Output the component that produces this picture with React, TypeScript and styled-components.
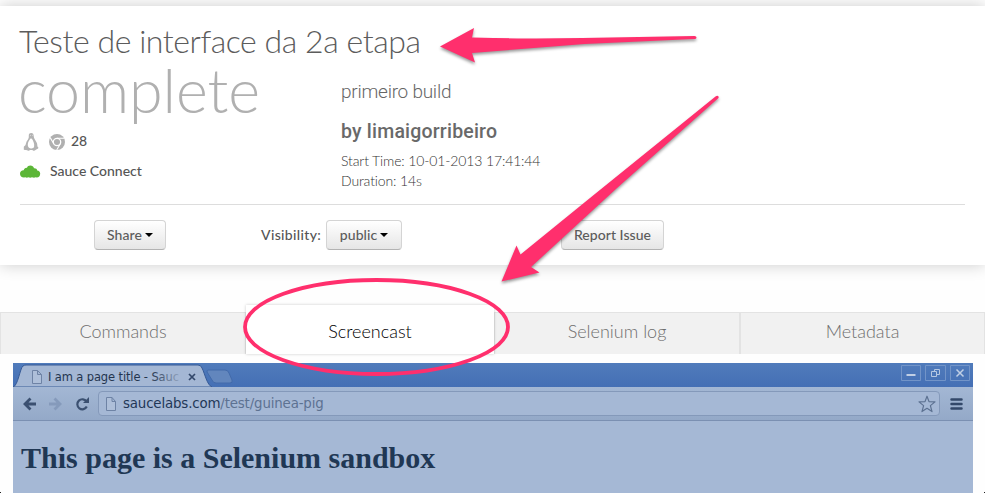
import React from 'react';
import styled, { createGlobalStyle } from 'styled-components';

const Global = createGlobalStyle`
  * { box-sizing: border-box; }
  html, body { margin: 0; padding: 0; overflow: hidden; background: #fff; }
  body { font-family: Lato, sans-serif; color: #555; }
`;

const Page = styled.div`
  position: relative;
  width: 985px;
  height: 493px;
  overflow: hidden;
  background: #fefefe;
  padding-top: 6px;
`;

const Card = styled.section`
  height: 259px;
  background: #fff;
  box-shadow: 0 0 15px rgba(0, 0, 0, 0.2);
  padding: 0 20px;
  display: flex;
  flex-direction: column;
`;

const Summary = styled.div`
  height: 199px;
  border-bottom: 1px solid #ddd;
  display: grid;
  grid-template-columns: 321px 1fr;
  grid-template-rows: 59px 1fr;
`;

const Title = styled.h1`
  grid-column: 1 / -1;
  margin: 0 0 0 -1px;
  padding-top: 15px;
  font-size: 32px;
  line-height: 40px;
  font-weight: 300;
  letter-spacing: -0.44px;
  color: #5c5c5c;
  white-space: nowrap;
`;

const StatusColumn = styled.div`
  display: flex;
  flex-direction: column;
`;

const Status = styled.div`
  height: 66px;
  margin-left: -2px;
  line-height: 50px;
  font-size: 61px;
  font-weight: 300;
  letter-spacing: -0.1px;
  color: #b0b0b0;
`;

const Platform = styled.div`
  display: flex;
  align-items: center;
  height: 22px;
  gap: 9px;
  font-size: 14px;
  font-weight: 500;
`;

const Version = styled.span`
  margin-left: -3px;
  padding-bottom: 3px;
`;

const Connect = styled.div`
  display: flex;
  align-items: center;
  height: 36px;
  gap: 9px;
  font-size: 14px;
  font-weight: 500;
  padding-bottom: 1px;
`;

const Details = styled.div`
  display: flex;
  flex-direction: column;
  padding-top: 14px;
`;

const Build = styled.div`
  font: 300 19px/26px Roboto, sans-serif;
  letter-spacing: -0.25px;
  color: #666;
`;

const Author = styled.div`
  margin-top: 14px;
  font: 500 19.5px/26px Roboto, sans-serif;
  letter-spacing: 0.2px;
  color: #696969;
`;

const Meta = styled.div`
  margin-top: 6px;
  font-size: 14px;
  line-height: 20px;
  font-weight: 300;
  letter-spacing: -0.13px;
  color: #333;
  white-space: pre-line;
`;

const Actions = styled.div`
  display: flex;
  align-items: flex-start;
  padding: 15px 0 0 74px;
`;

const Button = styled.button<{ $width: number }>`
  width: ${p => p.$width}px;
  height: 30px;
  padding: 0;
  display: flex;
  align-items: center;
  justify-content: center;
  gap: 3px;
  border: 1px solid #d4d4d4;
  border-bottom-color: #b3b3b3;
  border-radius: 4px;
  background: linear-gradient(#fff, #e6e6e6);
  color: #5c5c5c;
  font: 500 14px/20px Lato, sans-serif;
  letter-spacing: 0.05px;
  white-space: nowrap;
`;

const Caret = styled.i`
  border: 4px solid transparent;
  border-top-color: #000;
  border-bottom: 0;
`;

const Visibility = styled.label`
  width: 65px;
  margin-left: 95px;
  font-size: 14px;
  line-height: 30px;
  font-weight: 500;
  letter-spacing: 0.35px;
  white-space: nowrap;
`;

const ReportSlot = styled.div`
  margin-left: 159px;
`;

const Tabs = styled.nav`
  display: flex;
  align-items: flex-end;
  height: 50px;
  margin-top: 39px;
`;

const Tab = styled.div<{ $width: number; $active?: boolean }>`
  width: ${p => p.$width}px;
  height: ${p => (p.$active ? 49 : 42)}px;
  padding-top: ${p => (p.$active ? 8 : 0)}px;
  line-height: 37px;
  text-align: center;
  font-size: 18px;
  font-weight: 300;
  color: ${p => (p.$active ? '#000' : '#6e6e6e')};
  background: ${p => (p.$active ? '#fff' : '#f1f1f1')};
  border: ${p => (p.$active ? '0' : '1px solid #e3e3e3')};
  border-bottom: 0;
  box-shadow: ${p => (p.$active ? '0 0 3px rgba(0, 0, 0, 0.2)' : 'none')};
  position: relative;
  z-index: ${p => (p.$active ? 1 : 0)};
`;

const Browser = styled.section`
  margin: 9px 12px 0 13px;
  height: 130px;
  background: #a5b8d5;
`;

const TitleBar = styled.div`
  height: 24px;
  display: flex;
  background: linear-gradient(#507bbb, #446fb5);
  justify-content: space-between;
`;

const TabStrip = styled.svg`
  display: block;
  width: 230px;
  height: 24px;
`;

const WindowButtons = styled.svg`
  display: block;
  width: 74px;
  height: 24px;
`;

const Toolbar = styled.div`
  height: 34px;
  display: flex;
  align-items: center;
  padding-left: 8px;
  background: linear-gradient(#a3b7d4, #94a9c8);
  border-bottom: 1px solid #7b90b2;
`;

const Address = styled.div`
  width: 842px;
  height: 25px;
  margin: 0 9px 0 9px;
  padding: 0 3px 0 6px;
  display: flex;
  align-items: center;
  border: 1px solid #8499ba;
  border-radius: 4px;
  background: #a5b8d5;
  font: 13.4px/22px "DejaVu Sans", sans-serif;
  letter-spacing: -0.17px;
  color: #5d7292;
`;

const Url = styled.span`
  flex: 1;
  padding-left: 6px;
  white-space: nowrap;
  b { font-weight: 400; color: #223757; }
`;

const Heading = styled.h2`
  margin: 0;
  padding: 19px 0 0 8px;
  font: bold 30px/36px "Liberation Serif", serif;
  color: #203754;
`;

const Annotation = styled.svg`
  position: absolute;
  inset: 0;
  z-index: 2;
  pointer-events: none;
  filter: drop-shadow(0 2px 1.5px rgba(0, 0, 0, 0.4));
`;

const Highlight = styled.svg`
  position: absolute;
  inset: 0;
  z-index: 2;
  pointer-events: none;
`;

const CornerMark = styled.i<{ $right?: boolean }>`
  position: absolute;
  bottom: 0;
  ${p => (p.$right ? 'right: 0;' : 'left: 0;')}
  width: 1px;
  height: 1px;
  background: #222;
`;

const Penguin = () => (
  <svg width="20" height="20" viewBox="0 0 20 20">
    <path d="M11.2 1C9.4 1 8.6 2.3 8.8 4c.2 2.2-.8 3.4-1.9 5.1-.8 1.4-.9 3.2-1.5 4.2-.7 1-1.8 1-1.6 2.1.3.8-.4 1.7.2 2.3 1 .5 3 .3 4.1 1 .9.3 1.4-.1 1.9-.6h2.4c.5.8 1.4 1 2.3.3.9-.8 3.3-1.6 3.7-2.5.2-.6-.8-.8-1-1.7-.1-1.1-.1-2.6-.9-4-1-2-2.800-3.800-2.800-6.100C13.700 2 12.900 1 11.200 1z" fill="#b3b3b3" />
    <path d="M10.300 6.400c-1 2-2.500 3.600-2.500 5.800-.2 1.600.6 3.500 2.300 4 1.500.5 3.700.1 4-1.500.6-2.900-.8-6.100-2.400-8.300l-.7.400z" fill="#fff" />
    <path d="M10.300 3.400h.6M12 3.400h.5" stroke="#fff" strokeWidth=".8" />
  </svg>
);

const Chrome = () => (
  <svg width="16" height="16" viewBox="0 0 16 16">
    <circle cx="8" cy="8" r="8" fill="#b0b0b0" />
    <circle cx="8" cy="8" r="3.700" fill="#b0b0b0" stroke="#fff" strokeWidth="1.300" />
    <path d="M8 4.300h7.300M4.800 9.800 1.200 3.600M11.200 9.900 7.700 16" stroke="#fff" strokeWidth="1.100" fill="none" />
  </svg>
);

const Cloud = () => (
  <svg width="21" height="14" viewBox="0 0 21 14">
    <path d="M4 13.500C1.500 13.500 0 12 0 9.800 0 7.600 1.600 6.200 3.700 6.300 4.100 4.500 5.500 3.600 6.900 3.900 7.500 2.200 8.800 1.500 10.300 1.500c1.900 0 3.200 1 3.700 2.700 1.700-.2 3 .7 3.200 2.200 1.800 0 3 1.400 3 3.400 0 2.200-1.400 3.700-3.400 3.700l-1.300-.3-1.500.5-2-.4-1.700.4-2-.4-1.500.4-1.500-.4z" fill="#5cb637" />
  </svg>
);

const PageIcon = () => (
  <svg width="12" height="16" viewBox="0 0 12 16">
    <path d="M1.500 1.500h5.500l3.500 4v9h-9zM7 1.500v4h3.500" fill="#aebfd9" stroke="#6e83a5" />
  </svg>
);

const tabs = [
  { label: 'Commands', width: 246 },
  { label: 'Screencast', width: 248, active: true },
  { label: 'Selenium log', width: 246 },
  { label: 'Metadata', width: 245 },
];

export default function App() {
  return (
    <Page>
      <Global />
      <Card>
        <Summary>
          <Title>Teste de interface da 2a etapa</Title>
          <StatusColumn>
            <Status>complete</Status>
            <Platform><Penguin /><Chrome /><Version>28</Version></Platform>
            <Connect><Cloud />Sauce Connect</Connect>
          </StatusColumn>
          <Details>
            <Build>primeiro build</Build>
            <Author>by limaigorribeiro</Author>
            <Meta>{'Start Time: 10-01-2013 17:41:44\nDuration: 14s'}</Meta>
          </Details>
        </Summary>
        <Actions>
          <Button $width={72}>Share<Caret /></Button>
          <Visibility>Visibility:</Visibility>
          <Button $width={76}>public<Caret /></Button>
          <ReportSlot><Button $width={103}>Report Issue</Button></ReportSlot>
        </Actions>
      </Card>
      <Tabs>
        {tabs.map(t => <Tab key={t.label} $width={t.width} $active={t.active}>{t.label}</Tab>)}
      </Tabs>
      <Browser>
        <TitleBar>
          <TabStrip viewBox="0 0 230 24">
            <defs>
              <linearGradient id="fade" gradientUnits="userSpaceOnUse" x1="138" x2="168" y1="0" y2="0">
                <stop stopColor="#23344e" />
                <stop offset="1" stopColor="#23344e" stopOpacity=".1" />
              </linearGradient>
            </defs>
            <path d="M0 24C5 23 7 5 10 3q1-1 3-1h172q3 0 4 3c3 6 5 17 10 19z" fill="#a4b7d4" stroke="#365a96" />
            <path d="M195 7h17q3 0 4 3l3 7q1 3-2 3h-14q-3 0-4-3l-5-8q0-2 1-2z" fill="#6286bd" stroke="#426aaa" />
            <path d="M19.500 7.500h5l4 4v9h-9zM24.500 7.500v4h4" fill="#aebfd9" stroke="#6e83a5" />
            <text x="35" y="18" fontFamily="DejaVu Sans, sans-serif" fontSize="11.500" textLength="131" fill="url(#fade)">I am a page title - Sauc</text>
            <path d="m176 11 6 6m0-6-6 6" stroke="#33486b" strokeWidth="1.700" />
          </TabStrip>
          <WindowButtons viewBox="0 0 74 24" fill="none">
            <path d="M2.500 2.500h19v15h-19zM26.500 2.500h20v15h-20zM51.500 2.500h19v15h-19z" stroke="#7294c8" />
            <path d="M7.500 12h9" stroke="#c0cfe5" strokeWidth="2" />
            <path d="M32.500 8.500h5v5h-5zM35.500 8V6.500h5v5H38" stroke="#b5c7e2" />
            <path d="m57.500 6.500 7 7m0-7-7 7" stroke="#c0cfe5" strokeWidth="1.500" />
          </WindowButtons>
        </TitleBar>
        <Toolbar>
          <svg width="68" height="20" viewBox="0 0 68 20" fill="none" strokeWidth="2.800">
            <path d="M15 10H3.500m6-5.500L4 10l5.500 5.500" stroke="#3b5071" />
            <path d="M28 10h11.500m-6-5.500L39 10l-5.500 5.500" stroke="#859abb" />
            <path d="M65.500 7.500a5 5 0 1 0 .3 5" stroke="#3b5071" strokeWidth="2.200" />
            <path d="M68 3v6h-6z" fill="#3b5071" />
          </svg>
          <Address>
            <PageIcon />
            <Url><b>saucelabs.com</b>/test/guinea-pig</Url>
            <svg width="18" height="18" viewBox="0 0 18 18">
              <path d="m9 1.200 2 5.400 6 .3-4.600 3.700 1.600 6L9 13.300l-5 3.300 1.600-6L1 6.900l6-.3z" fill="none" stroke="#5c7191" strokeWidth="1.200" strokeLinejoin="round" />
            </svg>
          </Address>
          <svg width="15" height="14" viewBox="0 0 15 14">
            <path d="M2.500 2.500h10M2.500 7h10M2.500 11.500h10" stroke="#33486a" strokeWidth="2.500" strokeLinecap="round" />
          </svg>
        </Toolbar>
        <Heading>This page is a Selenium sandbox</Heading>
      </Browser>
      <Annotation width="985" height="493" viewBox="0 0 985 493">
        <path d="M440 46.500 474 28l-2 9.500q50 1.500 110 .5l112.500-2q2 0 2 1.500t-2 1.500l-110 5L472 53l3 9.500z" fill="#ff2f6d" />
        <path d="M501.500 281.500 516.500 245.500l4 9L590 198 715.500 96.500q2-1.500 3 0 .5 1-.5 2L617 188l-86 79 8.500 5.500z" fill="#ff2f6d" />
      </Annotation>
      <Highlight width="985" height="493" viewBox="0 0 985 493">
        <ellipse cx="376.500" cy="327" rx="131.500" ry="47" fill="none" stroke="#ff2f6d" strokeWidth="3.800" />
      </Highlight>
      <CornerMark />
      <CornerMark $right />
    </Page>
  );
}
